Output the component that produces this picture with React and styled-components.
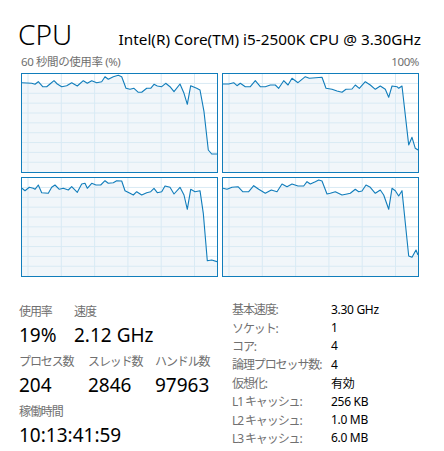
import React from 'react'
import styled, { createGlobalStyle } from 'styled-components'

const GlobalStyle = createGlobalStyle`
  html, body {
    margin: 0;
    padding: 0;
    background: #ffffff;
  }
  body {
    font-family: 'Noto Sans', 'Noto Sans CJK JP', sans-serif;
    color: #000;
  }
`

const W = 195
const H = 98

const cores = [
  '0,8.7 9.7,9.3 13,10.3 16.3,7.7 20.7,12.7 24.7,12.7 28,10 32,6.7 35.3,10 39.7,12.7 44.7,11.7 49.7,8.7 55.3,12 61.3,6.7 65.3,9.3 69.7,6.7 74.7,8.7 79.7,7.7 83,2.7 86.3,5.3 91.3,2.7 96.3,1.3 99.7,2.7 104,14.3 108,15.3 112,14.3 116.3,18.3 119.7,18.3 124.7,14.3 128.7,14.3 132,10.3 135.3,12 139.7,12.7 143.7,9.3 148,12.7 152,17.7 158,10 162,19.3 165.3,30.3 168.7,11.7 174.7,14.3 178,16 182,37.7 186.3,76 189.7,80 195,80',
  '0,10 5.7,10 10.7,8.7 14,11.7 17.3,9.3 22.3,12.7 27.3,12.7 32.3,6.7 37.3,12.7 42.3,12.7 47.3,11 52.3,11 55.7,14.3 60.7,6.7 65,11 69,4.3 75,8.7 82.3,2.7 86.3,4.3 99,3.3 103,14.3 109,15.3 114,17 119,18.3 123,15.3 129,15 132.3,11 136.3,14.3 142.3,7.7 147.3,11 152.3,15.3 157.3,12 162.3,15.3 165.7,23.3 169,12 174,12.7 175.7,14.3 179,12 185.7,71 189,63.3 192.3,74.3 195,76',
  '0,10.3 3,12.7 7.3,9.3 11.3,10.3 13,11.3 16.3,7 19.7,14.7 26.3,15.3 29.7,9.3 33,7 37.3,11.3 41.3,10.3 46.3,12 49.7,8.7 55.3,14.3 59.7,6 63,5.3 65.3,10.3 69.7,5.3 74,7 78.7,7 83,2.7 86.3,5.3 91.3,4.7 94.7,2.7 99.7,3 103,12.7 108,15.3 111.3,17 114.7,13.7 119.7,17 124.7,14.7 128.7,13.7 132,10.3 135.3,14.7 139.7,13.7 143,8 148,9.3 152,16 158,9.3 162,17 165.3,31.3 168.7,11.3 173,13.7 178,12.7 181.3,35.3 185.3,82.7 189.7,82 195,83.7',
  '0,10.3 4,11.3 9,9.3 15,8.7 19.7,13.7 25.7,13.7 30.7,7.7 35.7,11.3 42.3,15.3 48.3,12 54,13.7 59,6 64,8.7 69,6 75,8 80.7,8 84,3.7 87.3,6 92.3,3.7 95.7,2 99,3 104,16 107.3,15.3 112.3,13.7 119,17 124,16 127.3,15.3 132.3,11.3 135.7,13.7 139,13 143,7 147.3,9.3 152.3,15.3 157.3,12 160.7,17 165.7,31.3 169,10.3 172.3,12.7 175.7,18 179,12.7 185.7,78 189,79.3 193,72 195,77',
]

const Page = styled.div`
  width: 444px;
  height: 451px;
  box-sizing: border-box;
  padding: 16px 25px 0 21px;
  overflow: hidden;
`

const Header = styled.div`
  display: flex;
  justify-content: space-between;
  align-items: baseline;
  margin-right: -2px;
`

const Title = styled.div`
  font-size: 28px;
  font-weight: 300;
  line-height: 36px;
  margin-left: -3px;
  color: #000;
`

const Model = styled.div`
  font-size: 15.3px;
  line-height: 20px;
  color: #000;
`

const Caption = styled.div`
  display: flex;
  justify-content: space-between;
  font-size: 11.5px;
  line-height: 16px;
  letter-spacing: -0.4px;
  color: #707070;
  margin-top: 2px;
  margin-bottom: 3px;
`

const GraphGrid = styled.div`
  display: grid;
  grid-template-columns: repeat(2, 197px);
  grid-template-rows: repeat(2, 100px);
  gap: 4px;
`

const Panel = styled.div`
  border: 1px solid #117dbb;
  background: #ffffff;
  box-sizing: border-box;
  svg {
    display: block;
  }
`

const Stats = styled.div`
  display: flex;
  margin-top: 23px;
  margin-left: -2px;
`

const LeftStats = styled.div`
  width: 213px;
  display: flex;
  flex-direction: column;
  padding-top: 4px;
`

const StatRow = styled.div`
  display: flex;
  margin-bottom: 6px;
`

const Stat = styled.div`
  width: ${p => p.$w}px;
  flex: none;
`

const Label = styled.div`
  font-size: 12px;
  line-height: 16px;
  letter-spacing: -1.1px;
  white-space: nowrap;
  color: #707070;
`

const Value = styled.div`
  font-size: 19px;
  line-height: 26px;
  margin-top: 2px;
  color: #000;
`

const Specs = styled.div`
  display: grid;
  grid-template-columns: 99px auto;
  grid-auto-rows: 18.4px;
  align-items: center;
  font-size: 12px;
  white-space: nowrap;
`

const SpecLabel = styled.div`
  color: #707070;
  letter-spacing: -1.1px;
`

const SpecValue = styled.div`
  color: #000;
  letter-spacing: -0.3px;
`

function CoreChart({ points }) {
  const vLines = [6, 39.3, 72.6, 105.9, 139.2, 172.5]
  const hLines = [1, 2, 3, 4, 5, 6, 7, 8, 9].map(i => i * 9.85 - 0.4)
  return (
    <svg width={W} height={H} viewBox={`0 0 ${W} ${H}`}>
      <polygon points={`${points} ${W},${H} 0,${H}`} fill="#f1f6fa" />
      {vLines.map(x => (
        <line key={'v' + x} x1={x} x2={x} y1={0} y2={H} stroke="#d9eaf4" strokeWidth="1" />
      ))}
      {hLines.map(y => (
        <line key={'h' + y} x1={0} x2={W} y1={y} y2={y} stroke="#d9eaf4" strokeWidth="1" />
      ))}
      <polyline points={points} fill="none" stroke="#117dbb" strokeWidth="1.1" strokeLinejoin="round" />
    </svg>
  )
}

const specs = [
  ['基本速度:', '3.30 GHz'],
  ['ソケット:', '1'],
  ['コア:', '4'],
  ['論理プロセッサ数:', '4'],
  ['仮想化:', '有効'],
  ['L1 キャッシュ:', '256 KB'],
  ['L2 キャッシュ:', '1.0 MB'],
  ['L3 キャッシュ:', '6.0 MB'],
]

export default function App() {
  return (
    <Page>
      <GlobalStyle />
      <Header>
        <Title>CPU</Title>
        <Model>Intel(R) Core(TM) i5-2500K CPU @ 3.30GHz</Model>
      </Header>
      <Caption>
        <span>60 秒間の使用率 (%)</span>
        <span>100%</span>
      </Caption>
      <GraphGrid>
        {cores.map((pts, i) => (
          <Panel key={i}>
            <CoreChart points={pts} />
          </Panel>
        ))}
      </GraphGrid>
      <Stats>
        <LeftStats>
          <StatRow>
            <Stat $w={55}>
              <Label>使用率</Label>
              <Value>19%</Value>
            </Stat>
            <Stat $w={100}>
              <Label>速度</Label>
              <Value>2.12 GHz</Value>
            </Stat>
          </StatRow>
          <StatRow>
            <Stat $w={69}>
              <Label>プロセス数</Label>
              <Value>204</Value>
            </Stat>
            <Stat $w={67}>
              <Label>スレッド数</Label>
              <Value>2846</Value>
            </Stat>
            <Stat $w={70}>
              <Label>ハンドル数</Label>
              <Value>97963</Value>
            </Stat>
          </StatRow>
          <StatRow>
            <Stat $w={150}>
              <Label>稼働時間</Label>
              <Value>10:13:41:59</Value>
            </Stat>
          </StatRow>
        </LeftStats>
        <Specs>
          {specs.map(([k, v]) => (
            <React.Fragment key={k}>
              <SpecLabel>{k}</SpecLabel>
              <SpecValue>{v}</SpecValue>
            </React.Fragment>
          ))}
        </Specs>
      </Stats>
    </Page>
  )
}
